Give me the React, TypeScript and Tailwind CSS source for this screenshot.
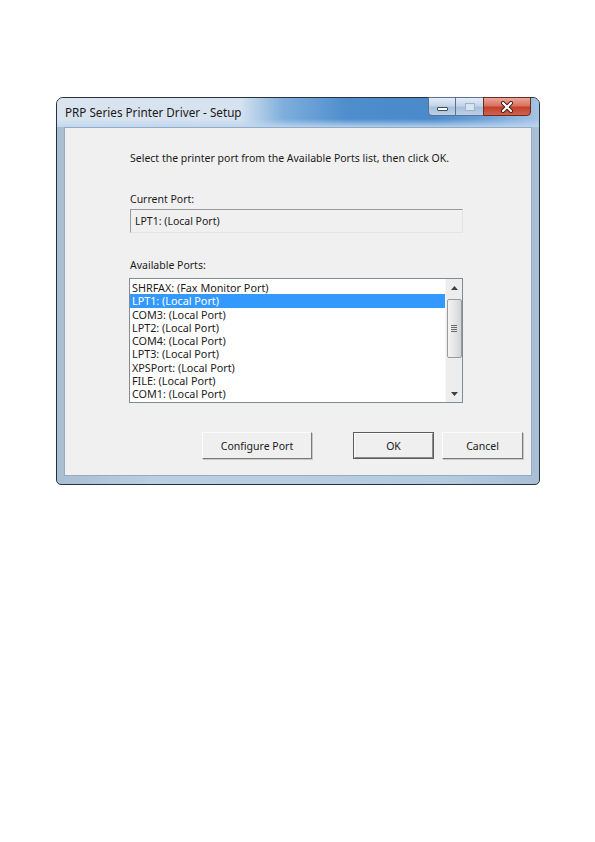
export default function App() {
  const ports = [
    "SHRFAX: (Fax Monitor Port)",
    "LPT1: (Local Port)",
    "COM3: (Local Port)",
    "LPT2: (Local Port)",
    "COM4: (Local Port)",
    "LPT3: (Local Port)",
    "XPSPort: (Local Port)",
    "FILE: (Local Port)",
    "COM1: (Local Port)",
    "COM2: (Local Port)",
  ];
  return (
    <div className="min-h-[842px] w-[595px] bg-white pt-[97px] pl-[56px] font-['Noto_Sans',sans-serif] text-[#1b1b1b]">
      <div className="w-[484px] h-[388px] flex flex-col rounded-t-[7px] rounded-b-[5px] border border-[#26323f] bg-[linear-gradient(90deg,#a9bdd3_0%,#bccee1_20%,#b7cbe0_80%,#a9bfd6_100%)]">
        {/* title bar */}
        <div className="h-[29px] flex items-start rounded-t-[6px] bg-[linear-gradient(180deg,rgba(255,255,255,0)_72%,rgba(190,214,240,0.9)_100%),linear-gradient(90deg,#d9e4ef_0%,#d6e2ef_38%,#7eaedc_47%,#4e8ecd_60%,#4a89ca_78%,#6c9fd4_88%,#a7c4e3_100%)]">
          <div className="pl-[8px] pt-[6px] text-[11.7px] leading-[16px] text-[#1a1a1a] whitespace-nowrap">
            PRP Series Printer Driver - Setup
          </div>
          <div className="ml-auto mr-[8px] flex h-[19px] -mt-px">
            <div className="w-[28px] h-[19px] rounded-bl-[4px] border border-[#5a7392] bg-[linear-gradient(180deg,#e3ecf6_0%,#c4d5e8_45%,#a9c0da_55%,#bcd0e6_100%)] flex items-end justify-center pb-[4px]">
              <div className="w-[11px] h-[4px] bg-white border border-[#3d4f66] rounded-[1px]" />
            </div>
            <div className="w-[27px] h-[19px] border-y border-[#5a7392] bg-[linear-gradient(180deg,#e3ecf6_0%,#c4d5e8_45%,#a9c0da_55%,#bcd0e6_100%)] flex items-center justify-center">
              <div className="w-[10px] h-[8px] border-[1.5px] border-[#9fb3cb] bg-[#d8e4f1]" />
            </div>
            <div className="w-[48px] h-[19px] rounded-br-[4px] border border-[#6b2a22] bg-[linear-gradient(180deg,#e9a99c_0%,#d9715f_45%,#c2412c_55%,#d0614d_100%)] flex items-center justify-center">
              <svg width="14" height="12" viewBox="0 0 14 12">
                <path d="M3 2 L11 10 M11 2 L3 10" stroke="#3b1c18" strokeWidth="4" strokeLinecap="round" />
                <path d="M3 2 L11 10 M11 2 L3 10" stroke="#ffffff" strokeWidth="2.2" strokeLinecap="round" />
              </svg>
            </div>
          </div>
        </div>
        {/* client */}
        <div className="mx-[7px] mb-[8px] flex-1 bg-[#f0f0f0] border border-[#94abc4] flex flex-col text-[10.5px]">
          <div className="ml-[65px] mt-[23px] h-[14px] leading-[14px] whitespace-nowrap">
            Select the printer port from the Available Ports list, then click OK.
          </div>
          <div className="ml-[65px] mt-[27px] h-[14px] leading-[14px]">Current Port:</div>
          <div className="ml-[65px] mt-[3px] h-[24px] w-[333px] border-t border-l border-[#9a9a9a] border-r border-b border-r-[#e4e4e4] border-b-[#e4e4e4] bg-[#f0f0f0] flex items-center pl-[4px] leading-[14px]">
            LPT1: (Local Port)
          </div>
          <div className="ml-[65px] mt-[25px] h-[14px] leading-[14px]">Available Ports:</div>
          <div className="ml-[64px] mt-[6px] h-[125px] w-[334px] border border-[#848a92] bg-white flex overflow-hidden text-[10.8px]">
            <div className="flex-1 pt-[2px] overflow-hidden">
              {ports.map((p, i) => (
                <div
                  key={p}
                  className={
                    i === 1
                      ? "h-[13.25px] leading-[13.25px] pl-[2px] bg-[#3399ff] text-white whitespace-nowrap"
                      : "h-[13.25px] leading-[13.25px] pl-[2px] whitespace-nowrap"
                  }
                >
                  {p}
                </div>
              ))}
            </div>
            <div className="w-[17px] bg-[#ededed] flex flex-col items-center border-l border-[#f6f6f6]">
              <div className="h-[17px] w-full flex items-center justify-center">
                <svg width="7" height="4" viewBox="0 0 7 4"><path d="M0 4 L3.5 0 L7 4 Z" fill="#404040" /></svg>
              </div>
              <div className="mt-[3px] h-[59px] w-[15px] rounded-[2px] border border-[#9a9a9a] bg-[linear-gradient(90deg,#f4f4f4_0%,#e6e6e6_50%,#d4d4d4_100%)] flex flex-col items-center justify-center gap-[1px]">
                <div className="w-[6px] h-[1px] bg-[#6a6a6a]" />
                <div className="w-[6px] h-[1px] bg-[#6a6a6a]" />
                <div className="w-[6px] h-[1px] bg-[#6a6a6a]" />
                <div className="w-[6px] h-[1px] bg-[#6a6a6a]" />
              </div>
              <div className="mt-auto h-[17px] w-full flex items-center justify-center">
                <svg width="7" height="4" viewBox="0 0 7 4"><path d="M0 0 L3.5 4 L7 0 Z" fill="#404040" /></svg>
              </div>
            </div>
          </div>
          <div className="mt-[29px] flex">
            <div className="ml-[137px] w-[110px] h-[27px] border border-t-[#fbfbfb] border-l-[#fbfbfb] border-r-[#7a7a7a] border-b-[#7a7a7a] bg-[#efefef] shadow-[1px_1px_0_#c8c8c8] flex items-center justify-center leading-[14px]">
              Configure Port
            </div>
            <div className="ml-[41px] w-[81px] h-[27px] border border-[#5c5c5c] bg-[#efefef] flex items-center justify-center leading-[14px]">
              <div className="w-full h-full border border-t-[#fbfbfb] border-l-[#fbfbfb] border-r-[#8a8a8a] border-b-[#8a8a8a] flex items-center justify-center">OK</div>
            </div>
            <div className="ml-[8px] w-[81px] h-[27px] border border-t-[#fbfbfb] border-l-[#fbfbfb] border-r-[#7a7a7a] border-b-[#7a7a7a] bg-[#efefef] shadow-[1px_1px_0_#c8c8c8] flex items-center justify-center leading-[14px]">
              Cancel
            </div>
          </div>
        </div>
      </div>
    </div>
  );
}
